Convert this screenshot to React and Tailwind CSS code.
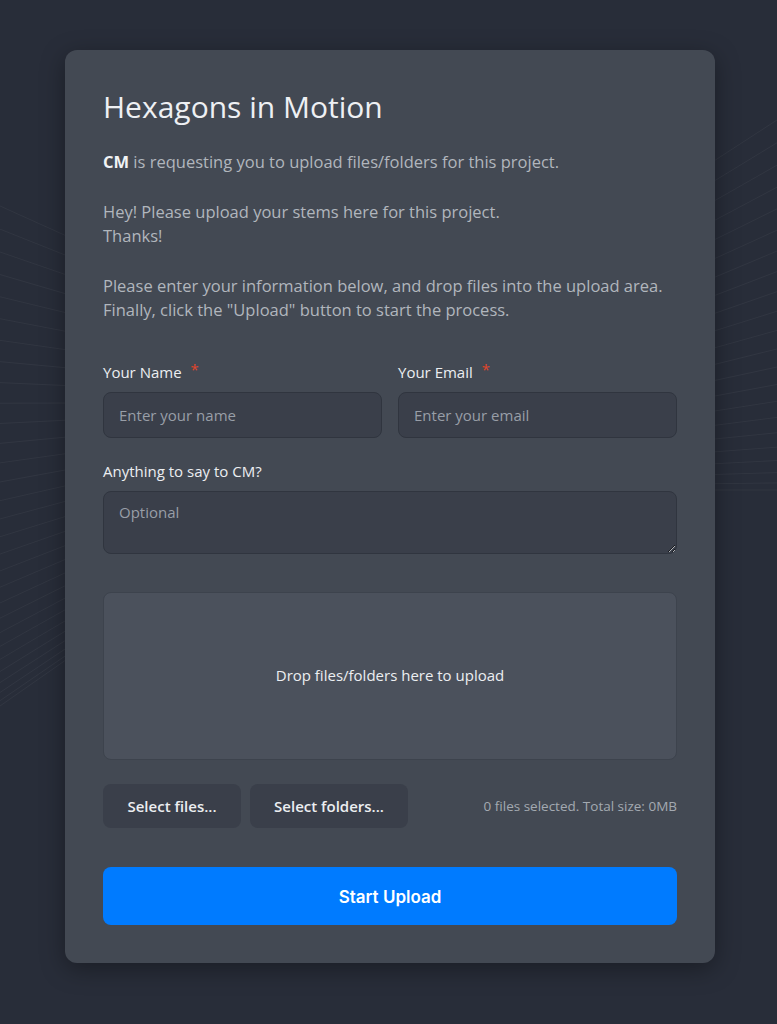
import React from 'react';

// perspective lines behind the card
const leftRays = Array.from({ length: 30 }, (_, i) => {
  const t = i / 29;
  const yAtEdge = 706 - 500 * Math.pow(t, 1.35);
  const s = (yAtEdge - 402) / (0 - 435);
  return { x1: 435, y1: 402, x2: -10, y2: 402 + s * (-10 - 435) };
});

const rightRays = Array.from({ length: 22 }, (_, i) => {
  const t = i / 21;
  const yAtEdge = 490 - 370 * Math.pow(t, 1.3);
  const s = (yAtEdge - 490) / (777 - 207);
  return { x1: 207, y1: 490, x2: 790, y2: 490 + s * (790 - 207) };
});

const Field = ({ label, required, children }) => (
  <div className="flex flex-col">
    <label className="flex items-start text-[15px] leading-5 font-medium text-[#eceef1]">
      {label}
      {required ? <span className="ml-[9px] text-[#e0452b] text-[15px] leading-[14px]">*</span> : null}
    </label>
    <div className="mt-[10px]">{children}</div>
  </div>
);

const App = () => {
  return (
    <div
      className="relative min-h-[1024px] w-full overflow-hidden bg-[#282d39] pt-[50px] pb-[61px]"
      style={{ fontFamily: '"Open Sans", "Noto Sans", sans-serif' }}
    >
      <svg className="absolute inset-0 h-full w-full" viewBox="0 0 777 1024" preserveAspectRatio="none">
        {leftRays.map((r, i) => (
          <line key={'l' + i} x1={r.x1} y1={r.y1} x2={r.x2} y2={r.y2} stroke="#ffffff" strokeOpacity="0.045" strokeWidth="1" />
        ))}
        {rightRays.map((r, i) => (
          <line key={'r' + i} x1={r.x1} y1={r.y1} x2={r.x2} y2={r.y2} stroke="#ffffff" strokeOpacity="0.045" strokeWidth="1" />
        ))}
      </svg>

      <div className="relative ml-[65px] w-[650px] rounded-xl bg-[#434953] px-[38px] pt-[38px] pb-[38px] shadow-[0_6px_24px_rgba(0,0,0,0.35)]">
        <h1 className="text-[30px] leading-[38px] font-normal text-[#eef0f3]">Hexagons in Motion</h1>

        <div className="mt-[24px] text-[16.5px] leading-6 text-[#b1b6bd]">
          <p>
            <span className="font-bold text-[#f1f3f5]">CM</span> is requesting you to upload files/folders for this project.
          </p>
          <p className="mt-[26px]">
            Hey! Please upload your stems here for this project.
            <br />
            Thanks!
          </p>
          <p className="mt-[26px]">
            Please enter your information below, and drop files into the upload area. Finally, click the "Upload"
            button to start the process.
          </p>
        </div>

        <div className="mt-[40px] grid grid-cols-2 gap-4">
          <Field label="Your Name" required>
            <input
              placeholder="Enter your name"
              className="h-[46px] w-full rounded-lg border border-[#30353f] bg-[#3a3f4a] px-[15px] text-[15px] text-[#eceef1] placeholder:text-[#989ea7] outline-none"
            />
          </Field>
          <Field label="Your Email" required>
            <input
              placeholder="Enter your email"
              className="h-[46px] w-full rounded-lg border border-[#30353f] bg-[#3a3f4a] px-[15px] text-[15px] text-[#eceef1] placeholder:text-[#989ea7] outline-none"
            />
          </Field>
        </div>

        <div className="mt-[23px]">
          <Field label="Anything to say to CM?">
            <textarea
              placeholder="Optional"
              className="block h-[63px] w-full rounded-lg border border-[#30353f] bg-[#3a3f4a] px-[15px] py-[10px] text-[15px] leading-5 text-[#eceef1] placeholder:text-[#989ea7] outline-none"
            />
          </Field>
        </div>

        <div className="mt-[38px] flex h-[168px] items-center justify-center rounded-lg border border-[#3d434d] bg-[#4b515c] pb-[2px] text-[15px] text-[#eceef1]">
          Drop files/folders here to upload
        </div>

        <div className="mt-[24px] flex items-center">
          <button className="h-[44px] w-[138px] rounded-lg bg-[#3a3f4a] text-[15px] font-semibold text-[#eceef1]">
            Select files...
          </button>
          <button className="ml-[9px] h-[44px] w-[158px] rounded-lg bg-[#3a3f4a] text-[15px] font-semibold text-[#eceef1]">
            Select folders...
          </button>
          <span className="ml-auto text-[13.5px] text-[#a3a9b1]">0 files selected. Total size: 0MB</span>
        </div>

        <button
          className="mt-[39px] h-[58px] w-full rounded-lg bg-[#007bff] pt-[3px] text-[17px] font-semibold text-white"
          style={{ fontFamily: 'Inter, sans-serif' }}
        >
          Start Upload
        </button>
      </div>
    </div>
  );
};

export default App;
